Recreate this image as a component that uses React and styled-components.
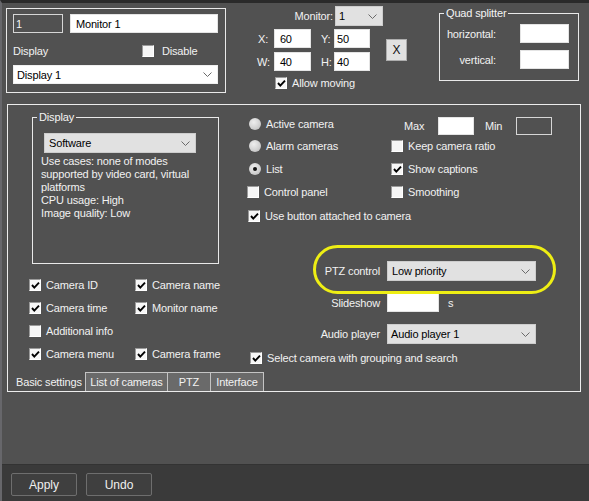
import React from 'react'
import styled, { createGlobalStyle } from 'styled-components'

const GlobalStyle = createGlobalStyle`
  html, body {
    margin: 0;
    padding: 0;
    background: #515151;
  }
  body {
    font-family: 'Liberation Sans', Arial, sans-serif;
    font-size: 11px;
    letter-spacing: -0.15px;
    color: #f2f2f2;
  }
  * {
    box-sizing: border-box;
  }
`

const Window = styled.div`
  width: 589px;
  height: 501px;
  background: #515151;
  border-top: 3px solid #2a2a2a;
  border-left: 2px solid #67676b;
  display: flex;
  flex-direction: column;
  overflow: hidden;
`

const TopArea = styled.div`
  display: flex;
  align-items: flex-start;
  height: 101px;
  flex: none;
`

const GroupBox = styled.div`
  border: 1px solid #e9e9e9;
  margin: ${(p) => p.$m};
  width: ${(p) => p.$w}px;
  height: ${(p) => p.$h}px;
  padding: ${(p) => p.$p || '0'};
  flex: none;
`

const Legend = styled.div`
  width: fit-content;
  height: 13px;
  line-height: 13px;
  margin: -7px 0 0 ${(p) => p.$x}px;
  padding: 0 2px;
  background: #515151;
  color: #f4f4f4;
`

const Row = styled.div`
  display: flex;
  align-items: ${(p) => p.$align || 'center'};
  height: ${(p) => p.$h}px;
  margin-top: ${(p) => p.$mt || 0}px;
  margin-left: ${(p) => p.$ml || 0}px;
  gap: ${(p) => p.$gap || 0}px;
`

const Cell = styled.div`
  width: ${(p) => p.$w}px;
  flex: none;
  display: flex;
  align-items: center;
  padding-left: ${(p) => p.$pl || 0}px;
  padding-top: ${(p) => p.$pt || 0}px;
`

const Label = styled.span`
  display: inline-block;
  width: ${(p) => (p.$w ? `${p.$w}px` : 'auto')};
  text-align: ${(p) => (p.$right ? 'right' : 'left')};
  padding-left: ${(p) => p.$pl || 0}px;
  white-space: nowrap;
  flex: none;
`

const TextField = styled.div`
  width: ${(p) => p.$w}px;
  height: ${(p) => p.$h || 19}px;
  background: ${(p) => (p.$dark ? '#515151' : '#ffffff')};
  border: 1px solid ${(p) => (p.$dark ? '#d6d6d6' : '#e4e4e4')};
  color: ${(p) => (p.$dark ? '#f4f4f4' : '#000')};
  display: flex;
  align-items: center;
  padding-left: 2px;
  flex: none;
`

const SelectBox = styled.div`
  width: ${(p) => p.$w}px;
  height: ${(p) => p.$h || 20}px;
  background: ${(p) => (p.$white ? '#ffffff' : '#e1e1e1')};
  border: 1px solid ${(p) => (p.$white ? '#f0f0f0' : '#cdcdcd')};
  color: #000;
  display: flex;
  align-items: center;
  justify-content: space-between;
  padding: 0 5px 0 ${(p) => p.$pl || 3}px;
  flex: none;
`

const Chevron = () => (
  <svg width="9" height="5" viewBox="0 0 9 5">
    <polyline points="0.5,0.5 4.5,4.5 8.5,0.5" fill="none" stroke="#6a6a6a" strokeWidth="1" />
  </svg>
)

const Select = ({ w, h, white, pl, children }) => (
  <SelectBox $w={w} $h={h} $white={white} $pl={pl}>
    <span>{children}</span>
    <Chevron />
  </SelectBox>
)

const BoxMark = styled.span`
  width: 12px;
  height: 12px;
  flex: none;
  background: #f6f6f6;
  border-top: 1px solid #9a9a9a;
  border-left: 1px solid #9a9a9a;
  border-right: 1px solid #ffffff;
  border-bottom: 1px solid #ffffff;
  display: inline-flex;
  align-items: center;
  justify-content: center;
`

const RadioMark = styled.span`
  width: 12px;
  height: 12px;
  flex: none;
  border-radius: 50%;
  background: radial-gradient(circle at 40% 35%, #eeeeee 0%, #d2d2d2 55%, #b5b5b5 100%);
  display: inline-flex;
  align-items: center;
  justify-content: center;
  &::after {
    content: '';
    display: ${(p) => (p.$on ? 'block' : 'none')};
    width: 4px;
    height: 4px;
    border-radius: 50%;
    background: #111;
  }
`

const OptionWrap = styled.label`
  display: inline-flex;
  align-items: center;
  gap: 5px;
  height: 12px;
  margin-left: ${(p) => p.$ml || 0}px;
  margin-top: ${(p) => p.$mt || 0}px;
  white-space: nowrap;
`

const Check = ({ on, ml, mt, children }) => (
  <OptionWrap $ml={ml} $mt={mt}>
    <BoxMark>
      {on && (
        <svg width="9" height="9" viewBox="0 0 9 9">
          <polyline points="1,4 3.3,6.6 8,1.6" fill="none" stroke="#000" strokeWidth="1.9" />
        </svg>
      )}
    </BoxMark>
    <span>{children}</span>
  </OptionWrap>
)

const Radio = ({ on, ml, mt, children }) => (
  <OptionWrap $ml={ml} $mt={mt}>
    <RadioMark $on={on} />
    <span>{children}</span>
  </OptionWrap>
)

const CenterBlock = styled.div`
  width: 151px;
  margin: 3px 0 0 30px;
  flex: none;
`

const CoordArea = styled.div`
  display: flex;
  align-items: center;
  margin-top: 3px;
`

const CoordGrid = styled.div`
  display: grid;
  grid-template-columns: 18px 37px 23px 36px;
  grid-template-rows: 19px 19px;
  row-gap: 4px;
  align-items: center;
`

const SmallButton = styled.div`
  width: 21px;
  height: 22px;
  margin-left: 16px;
  background: #e1e1e1;
  border: 1px solid #adadad;
  color: #111;
  font-size: 12px;
  display: flex;
  align-items: center;
  justify-content: center;
`

const QuadGrid = styled.div`
  display: grid;
  grid-template-columns: 52px 49px;
  grid-template-rows: 19px 19px;
  column-gap: 24px;
  row-gap: 7px;
  align-items: center;
  margin: 4px 0 0 4px;
`

const MainBox = styled.div`
  margin-left: 5px;
  width: 574px;
  height: 288px;
  border: 1px solid #ececec;
  display: flex;
  flex-direction: column;
  flex: none;
`

const Content = styled.div`
  flex: 1;
  display: flex;
`

const LeftCol = styled.div`
  width: 237px;
  flex: none;
`

const RightCol = styled.div`
  flex: 1;
  padding-left: 2px;
`

const Description = styled.div`
  margin: 2px 0 0 8px;
  line-height: 13px;
  white-space: nowrap;
`

const CheckGrid = styled.div`
  display: grid;
  grid-template-columns: 106px auto;
  grid-auto-rows: 12px;
  row-gap: 11px;
  margin: 15px 0 0 21px;
`

const PtzForm = styled.div`
  position: relative;
  display: grid;
  grid-template-columns: 133px auto;
  grid-template-rows: 20px 19px 20px;
  column-gap: 7px;
  row-gap: 12px;
  align-items: center;
  margin-top: 39px;
`

const Highlight = styled.div`
  position: absolute;
  left: 66px;
  top: -16px;
  width: 243px;
  height: 49px;
  border: 3px solid #eeee14;
  border-radius: 25px;
  pointer-events: none;
`

const FieldWithUnit = styled.div`
  display: flex;
  align-items: center;
  gap: 9px;
`

const TabStrip = styled.div`
  display: flex;
  height: 19px;
  flex: none;
`

const Tab = styled.div`
  width: ${(p) => p.$w}px;
  height: 19px;
  display: flex;
  align-items: center;
  justify-content: ${(p) => (p.$active ? 'flex-start' : 'center')};
  padding-left: ${(p) => (p.$active ? 8 : 0)}px;
  background: ${(p) => (p.$active ? 'transparent' : '#6a6a6a')};
  border: ${(p) => (p.$active ? 'none' : '1px solid #c4c4c4')};
  border-bottom: none;
  margin-left: ${(p) => (p.$active ? 0 : -1)}px;
  color: #f2f2f2;
  white-space: nowrap;
`

const Spacer = styled.div`
  flex: 1;
`

const Footer = styled.div`
  height: 37px;
  flex: none;
  background: #3a3a3a;
  border-top: 1px solid #333333;
  display: flex;
  gap: 9px;
  padding: 8px 0 0 9px;
`

const FooterButton = styled.div`
  width: 66px;
  height: 23px;
  border: 1px solid #6e6e6e;
  border-radius: 2px;
  background: #3f3f3f;
  color: #f0f0f0;
  font-size: 12px;
  letter-spacing: 0;
  display: flex;
  align-items: center;
  justify-content: center;
`

export default function App() {
  return (
    <>
      <GlobalStyle />
      <Window>
        <TopArea>
          <GroupBox $m="5px 0 0 4px" $w={220} $h={85} $p="5px 6px">
            <Row $h={19} $gap={7}>
              <TextField $w={50} $dark>1</TextField>
              <TextField $w={148}>&nbsp;Monitor 1</TextField>
            </Row>
            <Row $h={14} $mt={11}>
              <Cell $w={129}>Display</Cell>
              <Check>&nbsp;Disable</Check>
            </Row>
            <Row $h={19} $mt={7}>
              <Select w={205} h={19} white>Display 1</Select>
            </Row>
          </GroupBox>

          <CenterBlock>
            <Row $h={20} $gap={2}>
              <Label $w={77} $right>Monitor:</Label>
              <Select w={48} h={20}>1</Select>
            </Row>
            <CoordArea>
              <CoordGrid>
                <Label $pl={2}>X:</Label>
                <TextField $w={37}>&nbsp;60</TextField>
                <Label $pl={10}>Y:</Label>
                <TextField $w={36}>50</TextField>
                <Label $pl={1}>W:</Label>
                <TextField $w={37}>&nbsp;40</TextField>
                <Label $pl={10}>H:</Label>
                <TextField $w={36}>40</TextField>
              </CoordGrid>
              <SmallButton>X</SmallButton>
            </CoordArea>
            <Row $h={12} $mt={6} $ml={19}>
              <Check on>Allow moving</Check>
            </Row>
          </CenterBlock>

          <GroupBox $m="10px 0 0 32px" $w={140} $h={68}>
            <Legend $x={4}>Quad splitter</Legend>
            <QuadGrid>
              <Label $right>horizontal:</Label>
              <TextField $w={49} />
              <Label $right>vertical:</Label>
              <TextField $w={49} />
            </QuadGrid>
          </GroupBox>
        </TopArea>

        <MainBox>
          <Content>
            <LeftCol>
              <GroupBox $m="12px 0 0 24px" $w={187} $h={147}>
                <Legend $x={4}>Display</Legend>
                <Row $h={20} $mt={9} $ml={11}>
                  <Select w={152} h={20} pl={4}>Software</Select>
                </Row>
                <Description>
                  Use cases: none of modes
                  <br />
                  supported by video card, virtual
                  <br />
                  platforms
                  <br />
                  CPU usage: High
                  <br />
                  Image quality: Low
                </Description>
              </GroupBox>
              <CheckGrid>
                <Check on>Camera ID</Check>
                <Check on>Camera name</Check>
                <Check on>Camera time</Check>
                <Check on>Monitor name</Check>
                <Check>Additional info</Check>
                <span />
                <Check on>Camera menu</Check>
                <Check on>Camera frame</Check>
              </CheckGrid>
            </LeftCol>

            <RightCol>
              <Row $h={18} $mt={12} $align="flex-start">
                <Cell $w={144} $pt={1}>
                  <Radio ml={2}>Active camera</Radio>
                </Cell>
                <Row $h={18}>
                  <Label $w={47} $pl={13}>Max</Label>
                  <TextField $w={36} $h={18} />
                  <Label $w={42} $pl={11}>Min</Label>
                  <TextField $w={36} $h={18} $dark />
                </Row>
              </Row>
              <Row $h={12} $mt={5}>
                <Cell $w={144}>
                  <Radio ml={2}>Alarm cameras</Radio>
                </Cell>
                <Check>Keep camera ratio</Check>
              </Row>
              <Row $h={12} $mt={11}>
                <Cell $w={144}>
                  <Radio ml={2} on>List</Radio>
                </Cell>
                <Check on>Show captions</Check>
              </Row>
              <Row $h={12} $mt={11}>
                <Cell $w={144}>
                  <Check>Control panel</Check>
                </Cell>
                <Check>Smoothing</Check>
              </Row>
              <Row $h={12} $mt={12}>
                <Check on ml={1}>Use button attached to camera</Check>
              </Row>

              <PtzForm>
                <Highlight />
                <Label $right>PTZ control</Label>
                <Select w={149} h={20} pl={4}>Low priority</Select>
                <Label $right>Slideshow</Label>
                <FieldWithUnit>
                  <TextField $w={52} />
                  <span>s</span>
                </FieldWithUnit>
                <Label $right>Audio player</Label>
                <Select w={149} h={20} pl={3}>Audio player 1</Select>
              </PtzForm>
              <Row $h={12} $mt={8} $ml={3}>
                <Check on>Select camera with grouping and search</Check>
              </Row>
            </RightCol>
          </Content>

          <TabStrip>
            <Tab $w={78} $active>Basic settings</Tab>
            <Tab $w={83}>List of cameras</Tab>
            <Tab $w={44}>PTZ</Tab>
            <Tab $w={54}>Interface</Tab>
          </TabStrip>
        </MainBox>

        <Spacer />

        <Footer>
          <FooterButton>Apply</FooterButton>
          <FooterButton>Undo</FooterButton>
        </Footer>
      </Window>
    </>
  )
}
